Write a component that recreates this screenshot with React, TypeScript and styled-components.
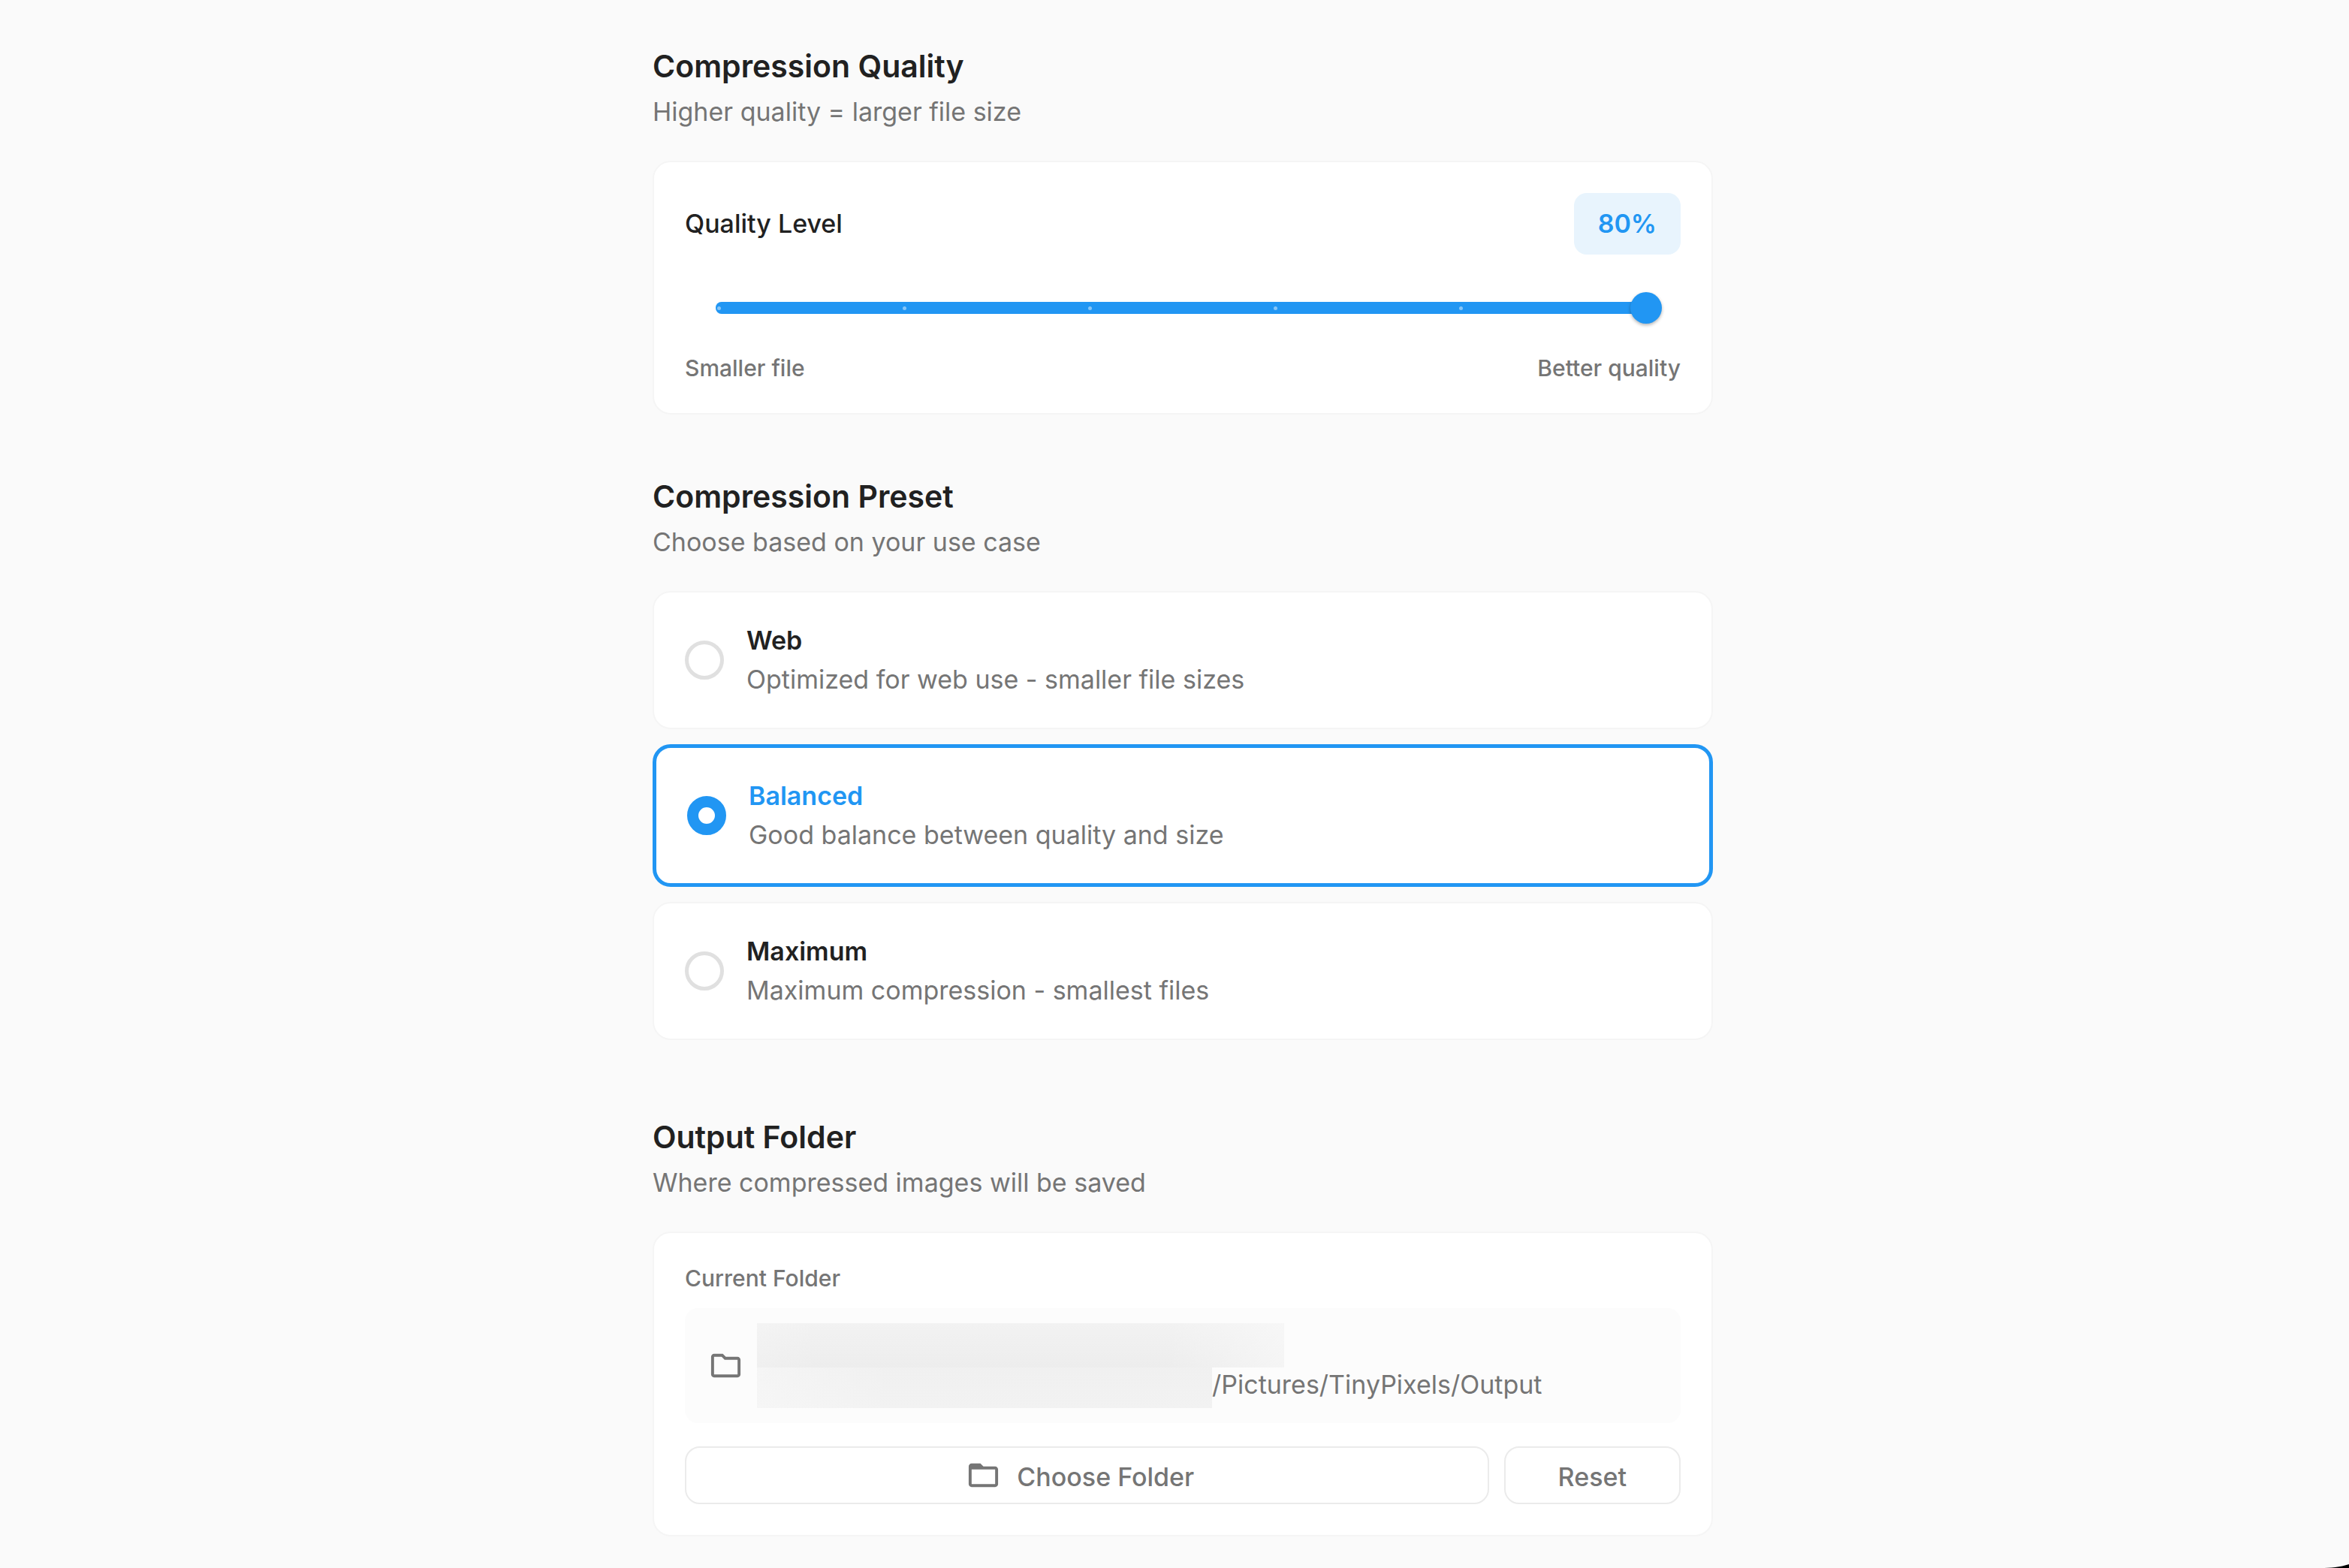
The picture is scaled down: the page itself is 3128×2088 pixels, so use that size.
import React, { useState } from "react";
import styled, { createGlobalStyle, css } from "styled-components";
import { MdOutlineFolder, MdOutlineFolderOpen } from "react-icons/md";

const color = {
  page: "#fafafa",
  surface: "#ffffff",
  inset: "#fcfcfc",
  hairline: "#f5f5f5",
  outline: "#ebebeb",
  ring: "#e0e0e0",
  ink: "#212121",
  muted: "#757575",
  accent: "#2196f3",
  accentSoft: "#e8f4fd",
};

const GlobalStyle = createGlobalStyle`
  *, *::before, *::after { box-sizing: border-box; }
  body {
    margin: 0;
    background: ${color.page};
    color: ${color.ink};
    font-family: Inter, "Liberation Sans", sans-serif;
    font-size: 34px;
    line-height: 46px;
  }
`;

const Page = styled.div`
  position: relative;
  min-height: 100vh;
  padding: 60px 0 40px 22px;
`;

const Content = styled.main`
  display: flex;
  flex-direction: column;
  gap: 81px;
  width: 100%;
  max-width: 1412px;
  margin: 0 auto;
`;

const Section = styled.section`
  display: flex;
  flex-direction: column;
`;

const SectionHeader = styled.header`
  display: flex;
  flex-direction: column;
  gap: 10px;
  margin-bottom: 42px;
`;

const SectionTitle = styled.h2`
  margin: 0;
  font-size: 41px;
  line-height: 56px;
  font-weight: 600;
`;

const Muted = styled.p`
  margin: 0;
  color: ${color.muted};
`;

const cardFrame = css`
  background: ${color.surface};
  border: 2px solid ${color.hairline};
  border-radius: 24px;
  padding: 41px;
`;

const Card = styled.div`
  ${cardFrame}
`;

const LevelRow = styled.div`
  display: flex;
  align-items: center;
  justify-content: space-between;
`;

const LevelLabel = styled.label`
  font-weight: 500;
`;

const Badge = styled.output`
  display: flex;
  align-items: center;
  height: 82px;
  padding: 0 32px;
  border-radius: 17px;
  background: ${color.accentSoft};
  color: ${color.accent};
  font-weight: 600;
`;

const Slider = styled.div`
  display: grid;
  align-items: center;
  height: 102px;
  margin: 20px 25px 10px;
  > * { grid-area: 1 / 1; }
`;

const Rail = styled.div`
  display: flex;
  align-items: center;
  justify-content: space-between;
  height: 16px;
  margin: 0 16px;
  padding: 0 2px;
  border-radius: 8px;
  background: #bbdefb;
`;

const RailFill = styled.div`
  height: 16px;
  margin: 0 16px;
  border-radius: 8px;
  background: ${color.accent};
`;

const Ticks = styled(Rail)`
  z-index: 1;
  background: none;
`;

const Tick = styled.span`
  width: 5px;
  height: 5px;
  border-radius: 50%;
  background: rgba(255, 255, 255, 0.45);
`;

const Range = styled.input`
  z-index: 2;
  appearance: none;
  width: 100%;
  height: 42px;
  margin: 0;
  background: transparent;
  cursor: pointer;
  &::-webkit-slider-thumb {
    appearance: none;
    width: 42px;
    height: 42px;
    border-radius: 50%;
    background: ${color.accent};
    box-shadow: 0 2px 4px rgba(0, 0, 0, 0.3);
  }
`;

const Ends = styled.div`
  display: flex;
  justify-content: space-between;
`;

const Caption = styled.span`
  display: block;
  color: ${color.muted};
  font-size: 30px;
  line-height: 38px;
  font-weight: 500;
`;

const PresetList = styled.div`
  display: flex;
  flex-direction: column;
  gap: 20px;
  padding-bottom: 20px;
`;

const PresetCard = styled.label<{ $selected: boolean }>`
  ${cardFrame}
  display: flex;
  align-items: center;
  gap: 30px;
  cursor: pointer;
  ${(p) => p.$selected && `border: 5px solid ${color.accent};`}
`;

const Radio = styled.input`
  appearance: none;
  flex: none;
  width: 52px;
  height: 52px;
  margin: 0;
  border: 5px solid ${color.ring};
  border-radius: 50%;
  &:checked { border: 15px solid ${color.accent}; }
`;

const PresetText = styled.span`
  display: flex;
  flex-direction: column;
  gap: 6px;
`;

const PresetName = styled.span<{ $selected: boolean }>`
  font-weight: 600;
  color: ${(p) => (p.$selected ? color.accent : color.ink)};
`;

const PresetHint = styled.span`
  color: ${color.muted};
`;

const PathBox = styled.div`
  display: flex;
  align-items: center;
  gap: 18px;
  height: 153px;
  margin: 21px 0 31px;
  padding: 0 31px;
  border-radius: 17px;
  background: ${color.inset};
  color: ${color.muted};
  svg { flex: none; }
`;

const PathLines = styled.div`
  display: flex;
  flex-direction: column;
  align-items: flex-start;
  min-width: 0;
`;

const PathLine = styled.div`
  display: flex;
  align-items: flex-start;
`;

const Redacted = styled.span<{ $second?: boolean }>`
  flex: none;
  width: ${(p) => (p.$second ? 606 : 702)}px;
  height: ${(p) => (p.$second ? 54 : 59)}px;
  background: ${(p) =>
    p.$second
      ? "linear-gradient(90deg, rgba(252,252,252,.4), rgba(252,252,252,0) 30%), linear-gradient(#f0f0f0, #f2f2f2)"
      : "linear-gradient(90deg, rgba(250,250,250,.2), rgba(250,250,250,0) 12%, rgba(250,250,250,0) 78%, rgba(250,250,250,.6)), linear-gradient(#f2f2f2, #ededed)"};
`;

const Actions = styled.div`
  display: flex;
  gap: 20px;
`;

const Button = styled.button<{ $grow?: boolean }>`
  display: flex;
  align-items: center;
  justify-content: center;
  gap: 21px;
  flex: ${(p) => (p.$grow ? "1" : "none")};
  height: 77px;
  padding: ${(p) => (p.$grow ? "0 52px 0 34px" : "0 70px")};
  border: 2px solid ${color.outline};
  border-radius: 20px;
  background: ${color.surface};
  color: ${color.muted};
  font: inherit;
  font-weight: 500;
  cursor: pointer;
`;

const ButtonLabel = styled.span`
  padding-top: 4px;
`;

const WindowCorner = styled.svg`
  position: absolute;
  right: 0;
  bottom: 0;
  display: block;
`;

const presets = [
  { id: "web", name: "Web", hint: "Optimized for web use - smaller file sizes" },
  { id: "balanced", name: "Balanced", hint: "Good balance between quality and size" },
  { id: "maximum", name: "Maximum", hint: "Maximum compression - smallest files" },
];

const MIN = 30;
const MAX = 80;
const STEP = 10;
const stops = Array.from({ length: (MAX - MIN) / STEP + 1 }, (_, i) => MIN + i * STEP);

function Heading({ title, hint }: { title: string; hint: string }) {
  return (
    <SectionHeader>
      <SectionTitle>{title}</SectionTitle>
      <Muted>{hint}</Muted>
    </SectionHeader>
  );
}

export default function App() {
  const [quality, setQuality] = useState(80);
  const [preset, setPreset] = useState("balanced");
  const remaining = ((MAX - quality) / (MAX - MIN)) * 100;

  return (
    <Page>
      <GlobalStyle />
      <Content>
        <Section>
          <Heading title="Compression Quality" hint="Higher quality = larger file size" />
          <Card>
            <LevelRow>
              <LevelLabel htmlFor="quality">Quality Level</LevelLabel>
              <Badge htmlFor="quality">{quality}%</Badge>
            </LevelRow>
            <Slider>
              <Rail />
              <RailFill style={{ clipPath: `inset(0 ${remaining}% 0 0)` }} />
              <Ticks>
                {stops.map((s) => (
                  <Tick key={s} />
                ))}
              </Ticks>
              <Range
                id="quality"
                type="range"
                min={MIN}
                max={MAX}
                step={STEP}
                value={quality}
                onChange={(e) => setQuality(Number(e.target.value))}
              />
            </Slider>
            <Ends>
              <Caption>Smaller file</Caption>
              <Caption>Better quality</Caption>
            </Ends>
          </Card>
        </Section>

        <Section>
          <Heading title="Compression Preset" hint="Choose based on your use case" />
          <PresetList role="radiogroup">
            {presets.map((p) => (
              <PresetCard key={p.id} htmlFor={p.id} $selected={p.id === preset}>
                <Radio
                  id={p.id}
                  type="radio"
                  name="preset"
                  checked={p.id === preset}
                  onChange={() => setPreset(p.id)}
                />
                <PresetText>
                  <PresetName $selected={p.id === preset}>{p.name}</PresetName>
                  <PresetHint>{p.hint}</PresetHint>
                </PresetText>
              </PresetCard>
            ))}
          </PresetList>
        </Section>

        <Section>
          <Heading title="Output Folder" hint="Where compressed images will be saved" />
          <Card>
            <Caption>Current Folder</Caption>
            <PathBox>
              <MdOutlineFolder size={47} />
              <PathLines>
                <PathLine>
                  <Redacted />
                </PathLine>
                <PathLine>
                  <Redacted $second />
                  <span>/Pictures/TinyPixels/Output</span>
                </PathLine>
              </PathLines>
            </PathBox>
            <Actions>
              <Button type="button" $grow>
                <MdOutlineFolderOpen size={47} />
                <ButtonLabel>Choose Folder</ButtonLabel>
              </Button>
              <Button type="button">
                <ButtonLabel>Reset</ButtonLabel>
              </Button>
            </Actions>
          </Card>
        </Section>
      </Content>
      <WindowCorner width="38" height="5" viewBox="0 0 38 5" aria-hidden="true">
        <path d="M0 5 C14 5 26 4 38 0 V5 Z" fill="#000" />
      </WindowCorner>
    </Page>
  );
}
